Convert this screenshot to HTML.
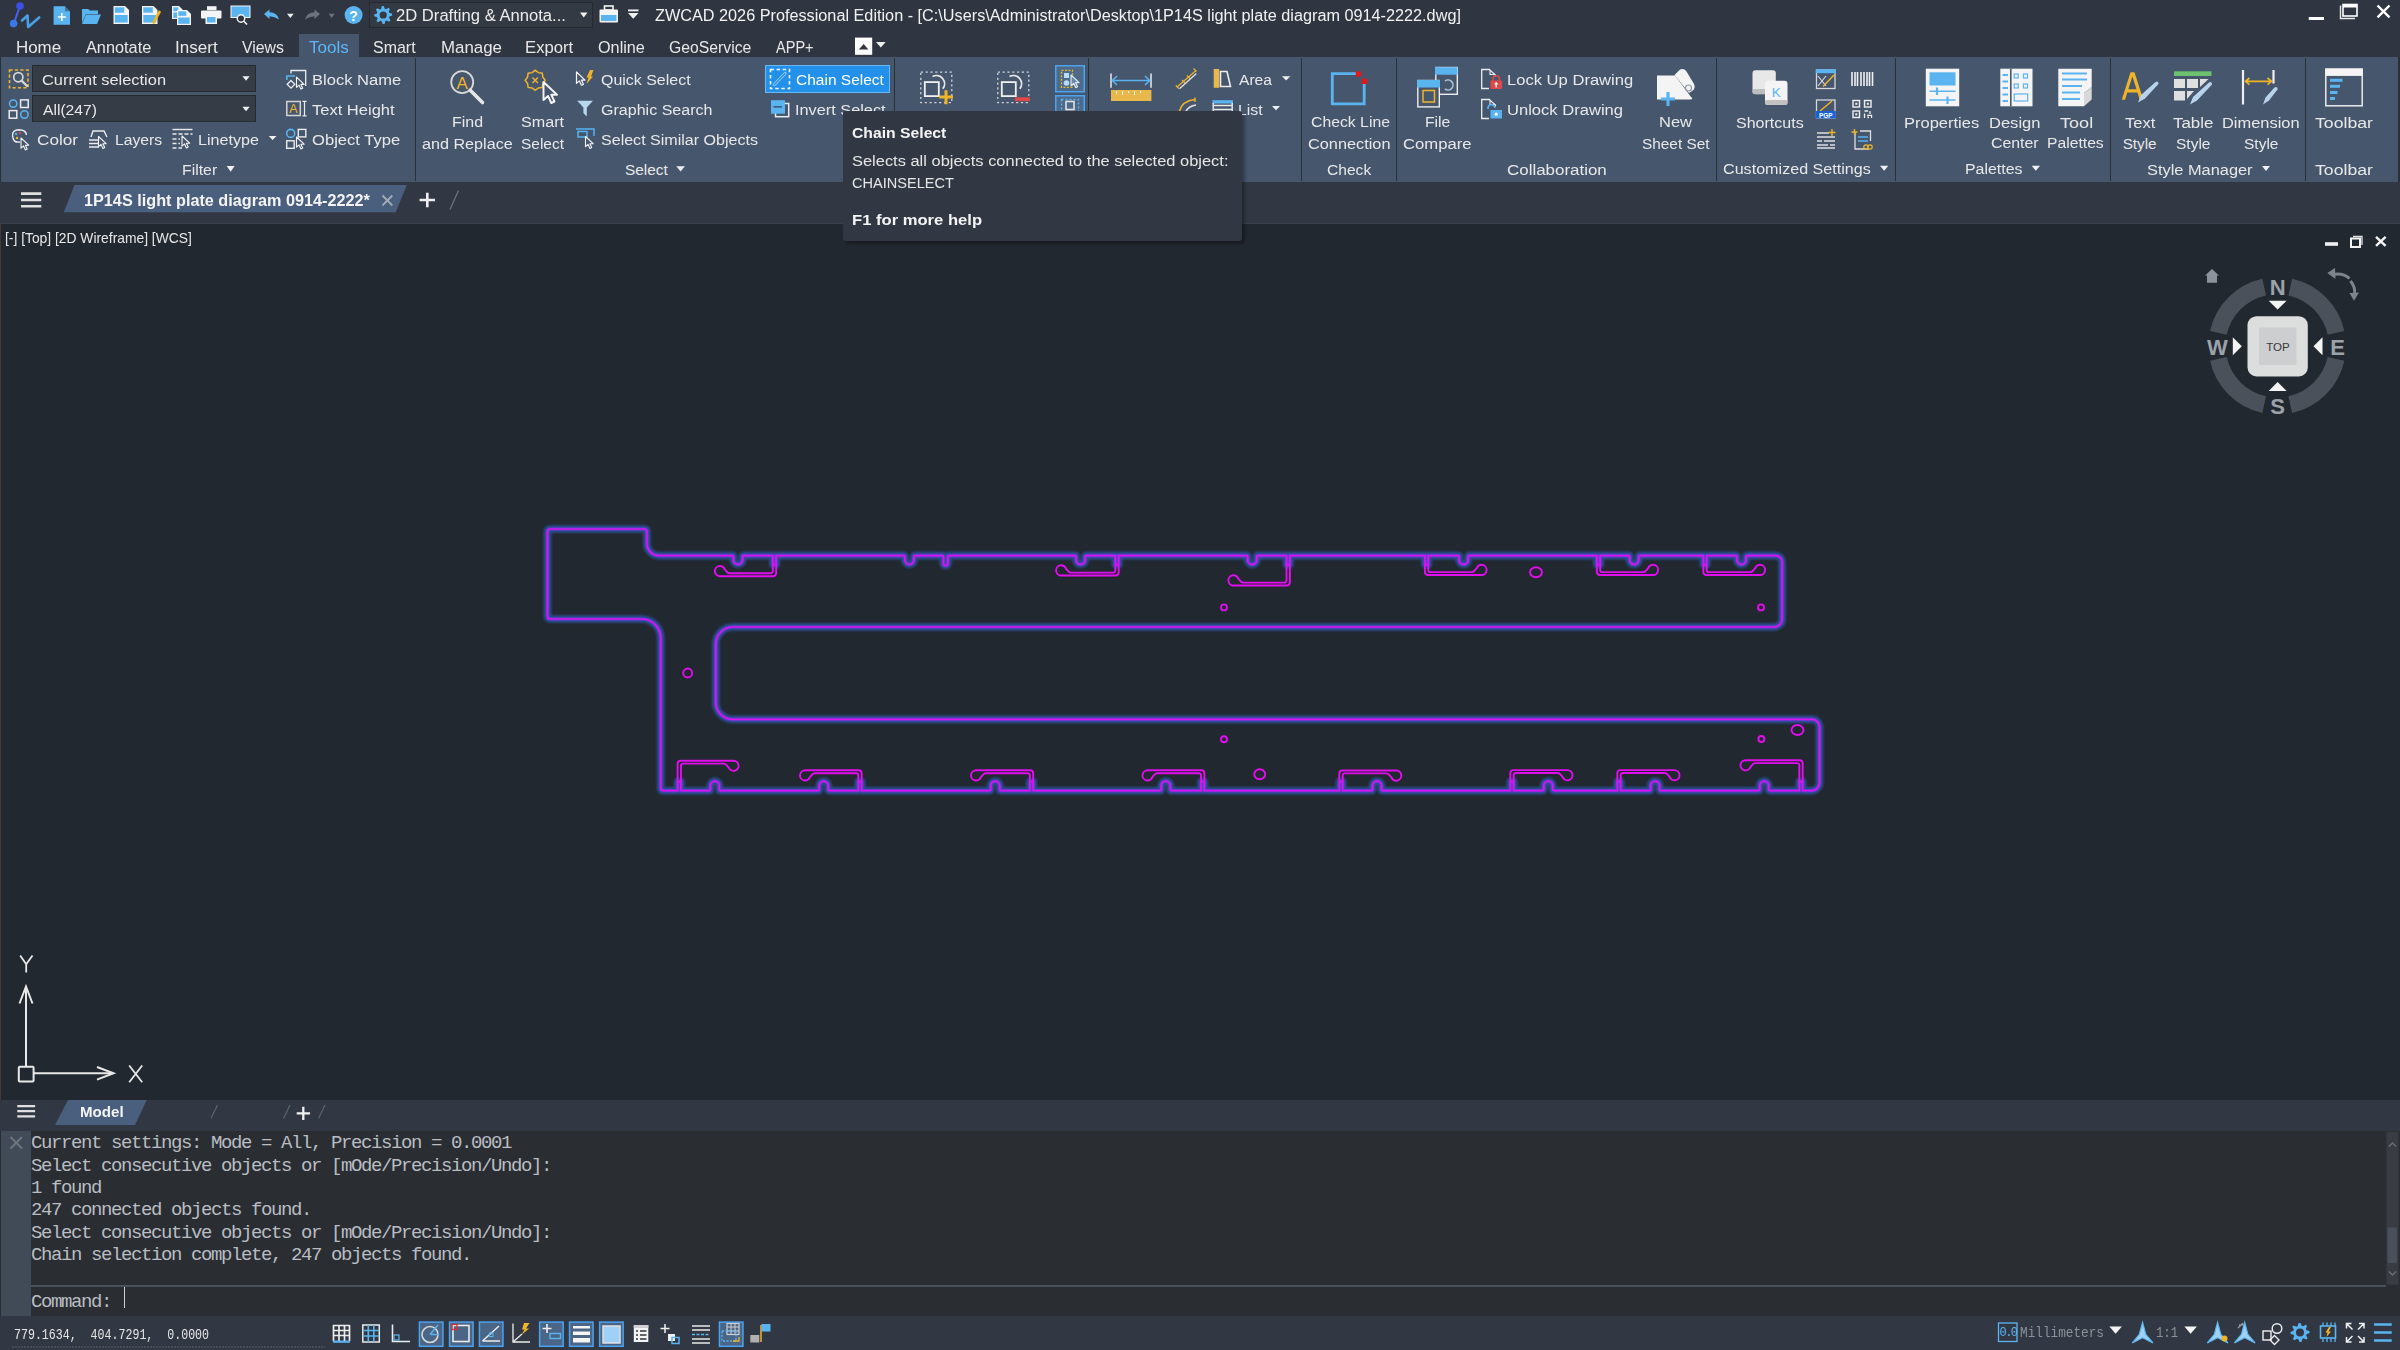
<!DOCTYPE html>
<html><head><meta charset="utf-8"><style>
html,body{margin:0;padding:0;width:2400px;height:1350px;overflow:hidden;background:#21262e;}
body{position:relative;font-family:"Liberation Sans", sans-serif;}
.t{position:absolute;white-space:pre;}
svg{overflow:visible;position:absolute}
</style></head><body>
<div style="position:absolute;left:0px;top:0px;width:2400px;height:57px;background:#303641"></div><div style="position:absolute;left:0px;top:57px;width:2400px;height:125px;background:#2b3038"></div><div style="position:absolute;left:1px;top:57px;width:2397px;height:125px;background:#46566d"></div><div style="position:absolute;left:0px;top:182px;width:2400px;height:42px;background:#323843"></div><div style="position:absolute;left:0px;top:224px;width:2400px;height:876px;background:#22282f"></div><div style="position:absolute;left:0px;top:223px;width:2400px;height:1px;background:#3a4048"></div><div style="position:absolute;left:0px;top:224px;width:1px;height:876px;background:#4a3532"></div><div style="position:absolute;left:0px;top:1100px;width:2400px;height:31px;background:#323843"></div><div style="position:absolute;left:0px;top:1131px;width:2400px;height:185px;background:#2a2d32"></div><div style="position:absolute;left:1px;top:1131px;width:30px;height:185px;background:#414a57"></div><div style="position:absolute;left:0px;top:1316px;width:2400px;height:34px;background:#323843"></div><div style="position:absolute;left:414.5px;top:58px;width:1.4px;height:123px;background:#2b3037"></div><div style="position:absolute;left:893.5px;top:58px;width:1.4px;height:123px;background:#2b3037"></div><div style="position:absolute;left:1087.5px;top:58px;width:1.4px;height:123px;background:#2b3037"></div><div style="position:absolute;left:1301.0px;top:58px;width:1.4px;height:123px;background:#2b3037"></div><div style="position:absolute;left:1396.0px;top:58px;width:1.4px;height:123px;background:#2b3037"></div><div style="position:absolute;left:1716.0px;top:58px;width:1.4px;height:123px;background:#2b3037"></div><div style="position:absolute;left:1894.5px;top:58px;width:1.4px;height:123px;background:#2b3037"></div><div style="position:absolute;left:2110.0px;top:58px;width:1.4px;height:123px;background:#2b3037"></div><div style="position:absolute;left:2304.5px;top:58px;width:1.4px;height:123px;background:#2b3037"></div><div style="position:absolute;left:299px;top:34px;width:60px;height:23px;background:#46566d"></div><div class="t" style="left:16.45px;top:38.80px;font-size:16.06px;line-height:16.06px;color:#e8e8e8;font-weight:normal;font-family:'Liberation Sans';transform:scaleX(1.0542);transform-origin:0 0;">Home</div><div class="t" style="left:86.30px;top:38.80px;font-size:16.06px;line-height:16.06px;color:#e8e8e8;font-weight:normal;font-family:'Liberation Sans';transform:scaleX(1.0154);transform-origin:0 0;">Annotate</div><div class="t" style="left:174.76px;top:38.80px;font-size:16.06px;line-height:16.06px;color:#e8e8e8;font-weight:normal;font-family:'Liberation Sans';transform:scaleX(1.0630);transform-origin:0 0;">Insert</div><div class="t" style="left:242.00px;top:38.80px;font-size:16.06px;line-height:16.06px;color:#e8e8e8;font-weight:normal;font-family:'Liberation Sans';transform:scaleX(0.9864);transform-origin:0 0;">Views</div><div class="t" style="left:308.66px;top:38.80px;font-size:16.06px;line-height:16.06px;color:#5db6f5;font-weight:normal;font-family:'Liberation Sans';transform:scaleX(1.0629);transform-origin:0 0;">Tools</div><div class="t" style="left:373.36px;top:38.80px;font-size:16.06px;line-height:16.06px;color:#e8e8e8;font-weight:normal;font-family:'Liberation Sans';transform:scaleX(0.9946);transform-origin:0 0;">Smart</div><div class="t" style="left:440.65px;top:38.80px;font-size:16.06px;line-height:16.06px;color:#e8e8e8;font-weight:normal;font-family:'Liberation Sans';transform:scaleX(1.0503);transform-origin:0 0;">Manage</div><div class="t" style="left:525.26px;top:38.80px;font-size:16.06px;line-height:16.06px;color:#e8e8e8;font-weight:normal;font-family:'Liberation Sans';transform:scaleX(1.0405);transform-origin:0 0;">Export</div><div class="t" style="left:598.35px;top:38.80px;font-size:16.06px;line-height:16.06px;color:#e8e8e8;font-weight:normal;font-family:'Liberation Sans';transform:scaleX(1.0110);transform-origin:0 0;">Online</div><div class="t" style="left:669.21px;top:38.80px;font-size:16.06px;line-height:16.06px;color:#e8e8e8;font-weight:normal;font-family:'Liberation Sans';transform:scaleX(0.9814);transform-origin:0 0;">GeoService</div><div class="t" style="left:776.40px;top:38.80px;font-size:16.06px;line-height:16.06px;color:#e8e8e8;font-weight:normal;font-family:'Liberation Sans';transform:scaleX(0.9066);transform-origin:0 0;">APP+</div><div class="t" style="left:655.31px;top:7.64px;font-size:15.78px;line-height:15.78px;color:#f2f2f2;font-weight:normal;font-family:'Liberation Sans';transform:scaleX(1.0299);transform-origin:0 0;">ZWCAD 2026 Professional Edition - [C:\Users\Administrator\Desktop\1P14S light plate diagram 0914-2222.dwg]</div><div style="position:absolute;left:369px;top:1.5px;width:224px;height:26.5px;background:#343a43;border:1px solid #262a30;box-sizing:border-box"></div><div class="t" style="left:396.17px;top:7.64px;font-size:15.78px;line-height:15.78px;color:#ececec;font-weight:normal;font-family:'Liberation Sans';transform:scaleX(1.0536);transform-origin:0 0;">2D Drafting &amp; Annota...</div><div style="position:absolute;left:31.5px;top:65px;width:224.5px;height:27px;background:#353c46;border:1px solid #262b32;box-sizing:border-box"></div><div style="position:absolute;left:31.5px;top:95.2px;width:224.5px;height:26.5px;background:#353c46;border:1px solid #262b32;box-sizing:border-box"></div><div class="t" style="left:41.68px;top:71.86px;font-size:15.22px;line-height:15.22px;color:#e8e8e8;font-weight:normal;font-family:'Liberation Sans';transform:scaleX(1.0779);transform-origin:0 0;">Current selection</div><div class="t" style="left:42.50px;top:102.01px;font-size:15.22px;line-height:15.22px;color:#e8e8e8;font-weight:normal;font-family:'Liberation Sans';transform:scaleX(1.0281);transform-origin:0 0;">All(247)</div><div class="t" style="left:36.84px;top:131.61px;font-size:15.22px;line-height:15.22px;color:#e8e8e8;font-weight:normal;font-family:'Liberation Sans';transform:scaleX(1.1265);transform-origin:0 0;">Color</div><div class="t" style="left:114.64px;top:131.61px;font-size:15.22px;line-height:15.22px;color:#e8e8e8;font-weight:normal;font-family:'Liberation Sans';transform:scaleX(1.0337);transform-origin:0 0;">Layers</div><div class="t" style="left:198.41px;top:131.61px;font-size:15.22px;line-height:15.22px;color:#e8e8e8;font-weight:normal;font-family:'Liberation Sans';transform:scaleX(1.0576);transform-origin:0 0;">Linetype</div><div class="t" style="left:312.48px;top:72.11px;font-size:15.22px;line-height:15.22px;color:#e8e8e8;font-weight:normal;font-family:'Liberation Sans';transform:scaleX(1.0860);transform-origin:0 0;">Block Name</div><div class="t" style="left:312.37px;top:102.01px;font-size:15.22px;line-height:15.22px;color:#e8e8e8;font-weight:normal;font-family:'Liberation Sans';transform:scaleX(1.0846);transform-origin:0 0;">Text Height</div><div class="t" style="left:312.04px;top:132.31px;font-size:15.22px;line-height:15.22px;color:#e8e8e8;font-weight:normal;font-family:'Liberation Sans';transform:scaleX(1.0903);transform-origin:0 0;">Object Type</div><div class="t" style="left:182.13px;top:161.90px;font-size:15.36px;line-height:15.36px;color:#e8e8e8;font-weight:normal;font-family:'Liberation Sans';transform:scaleX(1.0302);transform-origin:0 0;">Filter</div><div class="t" style="left:452.12px;top:114.41px;font-size:15.22px;line-height:15.22px;color:#e8e8e8;font-weight:normal;font-family:'Liberation Sans';transform:scaleX(1.0493);transform-origin:0 0;">Find</div><div class="t" style="left:422.45px;top:135.71px;font-size:15.22px;line-height:15.22px;color:#e8e8e8;font-weight:normal;font-family:'Liberation Sans';transform:scaleX(1.0614);transform-origin:0 0;">and Replace</div><div class="t" style="left:520.95px;top:114.41px;font-size:15.22px;line-height:15.22px;color:#e8e8e8;font-weight:normal;font-family:'Liberation Sans';transform:scaleX(1.0618);transform-origin:0 0;">Smart</div><div class="t" style="left:520.98px;top:135.71px;font-size:15.22px;line-height:15.22px;color:#e8e8e8;font-weight:normal;font-family:'Liberation Sans';transform:scaleX(1.0159);transform-origin:0 0;">Select</div><div class="t" style="left:600.66px;top:71.96px;font-size:15.22px;line-height:15.22px;color:#e8e8e8;font-weight:normal;font-family:'Liberation Sans';transform:scaleX(1.0486);transform-origin:0 0;">Quick Select</div><div class="t" style="left:600.50px;top:101.81px;font-size:15.22px;line-height:15.22px;color:#e8e8e8;font-weight:normal;font-family:'Liberation Sans';transform:scaleX(1.0542);transform-origin:0 0;">Graphic Search</div><div class="t" style="left:600.66px;top:132.11px;font-size:15.22px;line-height:15.22px;color:#e8e8e8;font-weight:normal;font-family:'Liberation Sans';transform:scaleX(1.0546);transform-origin:0 0;">Select Similar Objects</div><div class="t" style="left:625.09px;top:162.20px;font-size:15.36px;line-height:15.36px;color:#e8e8e8;font-weight:normal;font-family:'Liberation Sans';">Select</div><div style="position:absolute;left:765px;top:65px;width:125px;height:27.5px;background:#2391ea;border:1px solid #6cb8f5;box-sizing:border-box"></div><div class="t" style="left:796.02px;top:71.91px;font-size:15.22px;line-height:15.22px;color:#ffffff;font-weight:normal;font-family:'Liberation Sans';transform:scaleX(1.0188);transform-origin:0 0;">Chain Select</div><div class="t" style="left:795.33px;top:101.91px;font-size:15.22px;line-height:15.22px;color:#e8e8e8;font-weight:normal;font-family:'Liberation Sans';transform:scaleX(1.0711);transform-origin:0 0;">Invert Select</div><div class="t" style="left:1239.00px;top:72.11px;font-size:15.22px;line-height:15.22px;color:#e8e8e8;font-weight:normal;font-family:'Liberation Sans';transform:scaleX(1.0244);transform-origin:0 0;">Area</div><div class="t" style="left:1238.13px;top:101.51px;font-size:15.22px;line-height:15.22px;color:#e8e8e8;font-weight:normal;font-family:'Liberation Sans';transform:scaleX(1.0398);transform-origin:0 0;">List</div><div class="t" style="left:1310.71px;top:114.41px;font-size:15.22px;line-height:15.22px;color:#e8e8e8;font-weight:normal;font-family:'Liberation Sans';transform:scaleX(1.0367);transform-origin:0 0;">Check Line</div><div class="t" style="left:1308.38px;top:135.61px;font-size:15.22px;line-height:15.22px;color:#e8e8e8;font-weight:normal;font-family:'Liberation Sans';transform:scaleX(1.0716);transform-origin:0 0;">Connection</div><div class="t" style="left:1327.22px;top:161.60px;font-size:15.36px;line-height:15.36px;color:#e8e8e8;font-weight:normal;font-family:'Liberation Sans';transform:scaleX(1.0156);transform-origin:0 0;">Check</div><div class="t" style="left:1425.44px;top:114.41px;font-size:15.22px;line-height:15.22px;color:#e8e8e8;font-weight:normal;font-family:'Liberation Sans';transform:scaleX(1.0324);transform-origin:0 0;">File</div><div class="t" style="left:1403.37px;top:135.61px;font-size:15.22px;line-height:15.22px;color:#e8e8e8;font-weight:normal;font-family:'Liberation Sans';transform:scaleX(1.0946);transform-origin:0 0;">Compare</div><div class="t" style="left:1506.67px;top:72.11px;font-size:15.22px;line-height:15.22px;color:#e8e8e8;font-weight:normal;font-family:'Liberation Sans';transform:scaleX(1.0892);transform-origin:0 0;">Lock Up Drawing</div><div class="t" style="left:1506.84px;top:101.91px;font-size:15.22px;line-height:15.22px;color:#e8e8e8;font-weight:normal;font-family:'Liberation Sans';transform:scaleX(1.0890);transform-origin:0 0;">Unlock Drawing</div><div class="t" style="left:1507.15px;top:161.70px;font-size:15.36px;line-height:15.36px;color:#e8e8e8;font-weight:normal;font-family:'Liberation Sans';transform:scaleX(1.1024);transform-origin:0 0;">Collaboration</div><div class="t" style="left:1659.28px;top:114.41px;font-size:15.22px;line-height:15.22px;color:#e8e8e8;font-weight:normal;font-family:'Liberation Sans';transform:scaleX(1.0833);transform-origin:0 0;">New</div><div class="t" style="left:1642.38px;top:135.71px;font-size:15.22px;line-height:15.22px;color:#e8e8e8;font-weight:normal;font-family:'Liberation Sans';transform:scaleX(1.0108);transform-origin:0 0;">Sheet Set</div><div class="t" style="left:1736.06px;top:114.61px;font-size:15.22px;line-height:15.22px;color:#e8e8e8;font-weight:normal;font-family:'Liberation Sans';transform:scaleX(1.0531);transform-origin:0 0;">Shortcuts</div><div class="t" style="left:1723.39px;top:161.20px;font-size:15.36px;line-height:15.36px;color:#e8e8e8;font-weight:normal;font-family:'Liberation Sans';transform:scaleX(1.0497);transform-origin:0 0;">Customized Settings</div><div class="t" style="left:1904.48px;top:114.61px;font-size:15.22px;line-height:15.22px;color:#e8e8e8;font-weight:normal;font-family:'Liberation Sans';transform:scaleX(1.0841);transform-origin:0 0;">Properties</div><div class="t" style="left:1989.48px;top:114.61px;font-size:15.22px;line-height:15.22px;color:#e8e8e8;font-weight:normal;font-family:'Liberation Sans';transform:scaleX(1.0857);transform-origin:0 0;">Design</div><div class="t" style="left:1990.91px;top:135.41px;font-size:15.22px;line-height:15.22px;color:#e8e8e8;font-weight:normal;font-family:'Liberation Sans';transform:scaleX(1.0417);transform-origin:0 0;">Center</div><div class="t" style="left:2059.64px;top:114.61px;font-size:15.22px;line-height:15.22px;color:#e8e8e8;font-weight:normal;font-family:'Liberation Sans';transform:scaleX(1.1883);transform-origin:0 0;">Tool</div><div class="t" style="left:2047.04px;top:135.41px;font-size:15.22px;line-height:15.22px;color:#e8e8e8;font-weight:normal;font-family:'Liberation Sans';transform:scaleX(1.0313);transform-origin:0 0;">Palettes</div><div class="t" style="left:1965.43px;top:161.20px;font-size:15.36px;line-height:15.36px;color:#e8e8e8;font-weight:normal;font-family:'Liberation Sans';transform:scaleX(1.0368);transform-origin:0 0;">Palettes</div><div class="t" style="left:2124.97px;top:114.81px;font-size:15.22px;line-height:15.22px;color:#e8e8e8;font-weight:normal;font-family:'Liberation Sans';transform:scaleX(1.0851);transform-origin:0 0;">Text</div><div class="t" style="left:2122.69px;top:136.11px;font-size:15.22px;line-height:15.22px;color:#e8e8e8;font-weight:normal;font-family:'Liberation Sans';">Style</div><div class="t" style="left:2172.96px;top:114.81px;font-size:15.22px;line-height:15.22px;color:#e8e8e8;font-weight:normal;font-family:'Liberation Sans';transform:scaleX(1.1086);transform-origin:0 0;">Table</div><div class="t" style="left:2176.08px;top:136.11px;font-size:15.22px;line-height:15.22px;color:#e8e8e8;font-weight:normal;font-family:'Liberation Sans';transform:scaleX(1.0188);transform-origin:0 0;">Style</div><div class="t" style="left:2221.99px;top:114.81px;font-size:15.22px;line-height:15.22px;color:#e8e8e8;font-weight:normal;font-family:'Liberation Sans';transform:scaleX(1.0795);transform-origin:0 0;">Dimension</div><div class="t" style="left:2244.08px;top:136.11px;font-size:15.22px;line-height:15.22px;color:#e8e8e8;font-weight:normal;font-family:'Liberation Sans';transform:scaleX(1.0188);transform-origin:0 0;">Style</div><div class="t" style="left:2147.35px;top:162.00px;font-size:15.36px;line-height:15.36px;color:#e8e8e8;font-weight:normal;font-family:'Liberation Sans';transform:scaleX(1.0657);transform-origin:0 0;">Style Manager</div><div class="t" style="left:2314.95px;top:114.81px;font-size:15.22px;line-height:15.22px;color:#e8e8e8;font-weight:normal;font-family:'Liberation Sans';transform:scaleX(1.1613);transform-origin:0 0;">Toolbar</div><div class="t" style="left:2314.95px;top:162.00px;font-size:15.36px;line-height:15.36px;color:#e8e8e8;font-weight:normal;font-family:'Liberation Sans';transform:scaleX(1.1507);transform-origin:0 0;">Toolbar</div><svg style="left:0;top:0" width="2400" height="1350" viewBox="0 0 2400 1350"><polygon points="74.5,185 406.8,185 395.7,212.2 63.8,212.2" fill="#4a5f7d"/><polygon points="68,1100 146.7,1100 135,1125 55.1,1125" fill="#4a5f7d"/></svg><div class="t" style="left:83.83px;top:192.40px;font-size:16.06px;line-height:16.06px;color:#f4f4f4;font-weight:bold;font-family:'Liberation Sans';transform:scaleX(1.0112);transform-origin:0 0;">1P14S light plate diagram 0914-2222*</div><div class="t" style="left:5.03px;top:230.85px;font-size:14.94px;line-height:14.94px;color:#e8e8e8;font-weight:normal;font-family:'Liberation Sans';transform:scaleX(0.9263);transform-origin:0 0;">[-] [Top] [2D Wireframe] [WCS]</div><div class="t" style="left:79.99px;top:1105.15px;font-size:14.94px;line-height:14.94px;color:#f4f4f4;font-weight:bold;font-family:'Liberation Sans';transform:scaleX(1.0131);transform-origin:0 0;">Model</div><div class="t" style="left:31px;top:1134.04px;font-family:'Liberation Mono';font-size:19px;line-height:19px;letter-spacing:-1.4px;color:#b9bdc3">Current settings: Mode = All, Precision = 0.0001</div><div class="t" style="left:31px;top:1156.50px;font-family:'Liberation Mono';font-size:19px;line-height:19px;letter-spacing:-1.4px;color:#b9bdc3">Select consecutive objects or [mOde/Precision/Undo]:</div><div class="t" style="left:31px;top:1178.96px;font-family:'Liberation Mono';font-size:19px;line-height:19px;letter-spacing:-1.4px;color:#b9bdc3">1 found</div><div class="t" style="left:31px;top:1201.42px;font-family:'Liberation Mono';font-size:19px;line-height:19px;letter-spacing:-1.4px;color:#b9bdc3">247 connected objects found.</div><div class="t" style="left:31px;top:1223.88px;font-family:'Liberation Mono';font-size:19px;line-height:19px;letter-spacing:-1.4px;color:#b9bdc3">Select consecutive objects or [mOde/Precision/Undo]:</div><div class="t" style="left:31px;top:1246.34px;font-family:'Liberation Mono';font-size:19px;line-height:19px;letter-spacing:-1.4px;color:#b9bdc3">Chain selection complete, 247 objects found.</div><div class="t" style="left:31px;top:1292.74px;font-family:'Liberation Mono';font-size:19px;line-height:19px;letter-spacing:-1.4px;color:#b9bdc3">Command: </div><div style="position:absolute;left:124px;top:1286px;width:1.1px;height:22px;background:#d0d0d0"></div><div style="position:absolute;left:31px;top:1285px;width:2355px;height:1.5px;background:#4a535c"></div><div class="t" style="left:13.89px;top:1328.42px;font-size:14.85px;line-height:14.85px;color:#e6e6e6;font-weight:normal;font-family:'Liberation Mono';transform:scaleX(0.7820);transform-origin:0 0;">779.1634,  404.7291,  0.0000</div><div class="t" style="left:2020.04px;top:1326.39px;font-size:15.15px;line-height:15.15px;color:#8d9298;font-weight:normal;font-family:'Liberation Mono';transform:scaleX(0.8397);transform-origin:0 0;">Millimeters</div><div class="t" style="left:2156.44px;top:1326.39px;font-size:15.15px;line-height:15.15px;color:#8d9298;font-weight:normal;font-family:'Liberation Mono';transform:scaleX(0.8083);transform-origin:0 0;">1:1</div><svg style="left:0;top:0" width="2400" height="1350" viewBox="0 0 2400 1350"><line x1="20" y1="6.2" x2="13.75" y2="23.4" stroke="#4a62e8" stroke-width="2"/><circle cx="20" cy="6" r="3.8" fill="#3c4fe6"/><circle cx="13.6" cy="23.6" r="3.8" fill="#3a78e8"/><path d="M22 20.5 L27.5 15.5 L28.2 27 L39.2 17.5" fill="none" stroke="#4aa0e6" stroke-width="2.6" stroke-linejoin="round" stroke-linecap="round"/><path d="M53.6 6.2 H65 L70 11.2 V24.8 H53.6 Z" fill="#5ab4f0"/><path d="M65 6.2 V11.2 H70" fill="#2f343d" opacity="0.5"/><path d="M61.8 13 V21 M57.8 17 H65.8" stroke="#fff" stroke-width="1.6"/><path d="M82 9 H88 L90 10.5 H98 V14 H86 L82 23 Z" fill="#5ab4f0"/><path d="M86 14.5 H101 L97 24 H82 Z" fill="#5ab4f0"/><path d="M113.5 6 H125.0 L129.0 10 V24 H113.5 Z" fill="#f4f4f4"/><rect x="114.8" y="7.3" width="9.5" height="5.3999999999999995" fill="#5ab4f0"/><rect x="114.8" y="15.0" width="12.9" height="7.56" fill="#5ab4f0"/><path d="M142 6 H153.5 L157.5 10 V24 H142 Z" fill="#f4f4f4"/><rect x="143.3" y="7.3" width="9.5" height="5.3999999999999995" fill="#5ab4f0"/><rect x="143.3" y="15.0" width="12.9" height="7.56" fill="#5ab4f0"/><path d="M160 11 L153 23.5" stroke="#f0b429" stroke-width="2.6"/><path d="M172 6 H179 L183 10 V19 H172 Z" fill="#f4f4f4"/><rect x="173.3" y="7.3" width="5" height="3.9" fill="#5ab4f0"/><rect x="173.3" y="12.5" width="8.4" height="5.46" fill="#5ab4f0"/><path d="M177 10 H187 L191 14 V25 H177 Z" fill="#f4f4f4"/><rect x="178.3" y="11.3" width="8" height="4.5" fill="#5ab4f0"/><rect x="178.3" y="17.5" width="11.4" height="6.3" fill="#5ab4f0"/><rect x="207" y="6.2" width="9.5" height="4" fill="#f4f4f4"/><rect x="201" y="10.5" width="20.5" height="8" rx="1" fill="#f4f4f4"/><rect x="205.5" y="15.5" width="11.5" height="8.5" fill="#f4f4f4"/><rect x="207" y="17" width="8.5" height="5.5" fill="#5ab4f0"/><rect x="231" y="6" width="19" height="11.5" fill="#5ab4f0"/><rect x="231" y="6" width="19" height="11.5" fill="none" stroke="#f4f4f4" stroke-width="1"/><circle cx="241" cy="18.5" r="3.7" fill="#30353e" stroke="#f4f4f4" stroke-width="1.4"/><path d="M243.6 21 L247 24.5" stroke="#f4f4f4" stroke-width="1.6"/><path d="M264 14 L269.5 9.5 V12.3 Q277.5 12.5 279 19.5 Q275 16.5 269.5 16.3 V19 Z" fill="#5ab4f0"/><polygon points="287,13.8 293.7,13.8 290.35,17.9" fill="#f0f0f0"/><path d="M320 14 L314.5 9.5 V12.3 Q306.5 12.5 305 19.5 Q309 16.5 314.5 16.3 V19 Z" fill="#6c737c"/><polygon points="328.7,13.8 334.7,13.8 331.7,17.9" fill="#6c737c"/><circle cx="353.6" cy="15" r="9" fill="#5ab4f0"/><text x="353.6" y="20.5" font-family="Liberation Sans" font-weight="bold" font-size="14" fill="#fff" text-anchor="middle">?</text><polygon points="392.10,13.68 392.19,15.44 389.49,16.57 389.06,17.77 390.43,20.36 389.24,21.67 386.53,20.56 385.38,21.10 384.52,23.90 382.76,23.99 381.63,21.29 380.43,20.86 377.84,22.23 376.53,21.04 377.64,18.33 377.10,17.18 374.30,16.32 374.21,14.56 376.91,13.43 377.34,12.23 375.97,9.64 377.16,8.33 379.87,9.44 381.02,8.90 381.88,6.10 383.64,6.01 384.77,8.71 385.97,9.14 388.56,7.77 389.87,8.96 388.76,11.67 389.30,12.82" fill="#5ab4f0"/><circle cx="383.2" cy="15" r="3.6" fill="#343a43"/><polygon points="580,12.5 587.5,12.5 583.75,17.5" fill="#f0f0f0"/><rect x="604.5" y="6" width="8.5" height="4" fill="none" stroke="#f4f4f4" stroke-width="1.6"/><rect x="599.5" y="9.5" width="18.5" height="13" rx="1" fill="#f4f4f4"/><rect x="601" y="15" width="15.5" height="6" fill="#5ab4f0"/><rect x="628" y="9.5" width="10.5" height="1.8" fill="#f4f4f4"/><polygon points="628,13 638.5,13 633.25,18.75" fill="#f0f0f0"/><rect x="2308.75" y="17" width="15.25" height="3" fill="#fff"/><path d="M2340.5 5.5 V18.5 H2355" fill="none" stroke="#e8e8e8" stroke-width="1.4"/><rect x="2343" y="4.5" width="14" height="11.5" fill="none" stroke="#fff" stroke-width="1.6"/><rect x="2343" y="4.5" width="14" height="3" fill="#fff"/><path d="M2377.5 5.5 L2389.5 17.3 M2389.5 5.5 L2377.5 17.3" stroke="#fff" stroke-width="2.4"/><rect x="855" y="37.6" width="17.2" height="17.2" fill="#fff"/><polygon points="858.8,49.5 868.4,49.5 863.6,44" fill="#30353e"/><polygon points="876,42 885.6,42 880.8,47.5" fill="#f0f0f0"/><rect x="9.5" y="70" width="18.5" height="17.8" fill="none" stroke="#f0b429" stroke-width="1.6" stroke-dasharray="3.2 2.2"/><circle cx="18.3" cy="77.2" r="4.6" fill="none" stroke="#d6d6d6" stroke-width="1.7"/><path d="M21.6 80.6 L27 86" stroke="#d6d6d6" stroke-width="2.3" stroke-linecap="round"/><circle cx="13.2" cy="103.6" r="3.7" fill="none" stroke="#5ab4f0" stroke-width="1.5"/><rect x="20.6" y="99.9" width="7.6" height="7.6" fill="none" stroke="#ececec" stroke-width="1.5"/><rect x="9.2" y="110.6" width="7.6" height="7.6" fill="none" stroke="#ececec" stroke-width="1.5"/><circle cx="24.4" cy="114.5" r="3.7" fill="none" stroke="#5ab4f0" stroke-width="1.5"/><polygon points="242.4,76.3 249.7,76.3 246.05,80.8" fill="#f0f0f0"/><polygon points="242.4,106.7 249.7,106.7 246.05,111.2" fill="#f0f0f0"/><path d="M13 138 Q11 130 19 129.8 Q26 130 26.5 135" fill="none" stroke="#ececec" stroke-width="1.4"/><path d="M13 138 Q14 143 20 142" fill="none" stroke="#ececec" stroke-width="1.4"/><circle cx="16" cy="134" r="1.2" fill="#5ab4f0"/><circle cx="20" cy="133" r="1.2" fill="#e04848"/><circle cx="17" cy="138" r="1.2" fill="#f0b429"/><polygon points="21.00,138.00 21.00,148.20 23.55,145.91 25.42,149.90 27.20,149.05 25.42,145.22 28.65,145.22" fill="#46566d" stroke="#f4f4f4" stroke-width="1.10" stroke-linejoin="round"/><path d="M91 137 L93 131 H104 L107 137" fill="none" stroke="#ececec" stroke-width="1.4"/><path d="M89 140 H99 M89 143.5 H98 M89 147 H99" stroke="#ececec" stroke-width="1.5"/><polygon points="98.50,136.50 98.50,146.70 101.05,144.41 102.92,148.40 104.70,147.55 102.92,143.72 106.15,143.72" fill="#46566d" stroke="#f4f4f4" stroke-width="1.10" stroke-linejoin="round"/><path d="M172.5 129.5 H192.5" stroke="#ececec" stroke-width="1.4"/><path d="M172.5 134 H192.5 M172.5 139 H180 M172.5 143.5 H180 M172.5 148 H182" stroke="#ececec" stroke-width="1.4" stroke-dasharray="4 2"/><polygon points="182.00,136.00 182.00,146.20 184.55,143.91 186.42,147.90 188.21,147.05 186.42,143.22 189.65,143.22" fill="#46566d" stroke="#f4f4f4" stroke-width="1.10" stroke-linejoin="round"/><polygon points="268.7,136 276.5,136 272.6,139.9" fill="#f0f0f0"/><path d="M291 73.5 V70.5 H305.7 V86" fill="none" stroke="#ececec" stroke-width="1.3"/><path d="M286.8 80 V76 H295" fill="none" stroke="#5ab4f0" stroke-width="1.5"/><polygon points="291,80.5 294.8,84.3 291,88.1 287.2,84.3" fill="none" stroke="#ececec" stroke-width="1.3"/><polygon points="296.50,77.20 296.50,87.40 299.05,85.11 300.92,89.10 302.70,88.25 300.92,84.42 304.15,84.42" fill="#46566d" stroke="#f4f4f4" stroke-width="1.10" stroke-linejoin="round"/><rect x="286.8" y="101.5" width="13.5" height="14" fill="none" stroke="#d4d4d4" stroke-width="1.5"/><text x="293.5" y="113.3" font-family="Liberation Sans" font-size="12.5" fill="#f0b429" text-anchor="middle">A</text><path d="M304.5 101 V116 M302.5 101.3 H306.5 M302.5 115.8 H306.5" stroke="#ececec" stroke-width="1.2"/><circle cx="290.7" cy="133.4" r="4" fill="none" stroke="#5ab4f0" stroke-width="1.6"/><rect x="298.3" y="129.4" width="7.5" height="7.5" fill="none" stroke="#ececec" stroke-width="1.4"/><rect x="286.7" y="140.8" width="7.5" height="7.5" fill="none" stroke="#ececec" stroke-width="1.4"/><polygon points="296.50,137.00 296.50,147.20 299.05,144.91 300.92,148.90 302.70,148.05 300.92,144.22 304.15,144.22" fill="#46566d" stroke="#f4f4f4" stroke-width="1.10" stroke-linejoin="round"/><polygon points="226.7,166 234.6,166 230.64999999999998,171.75" fill="#f0f0f0"/><circle cx="462.2" cy="82.1" r="11" fill="none" stroke="#d8d8d8" stroke-width="1.8"/><path d="M470.2 90.2 L482.5 102.5" stroke="#e6e6e6" stroke-width="3.6" stroke-linecap="round"/><text x="462.2" y="88.6" font-family="Liberation Sans" font-size="17" fill="#f0b429" text-anchor="middle">A</text><polygon points="545.20,80.30 542.87,83.48 542.27,87.37 538.38,87.97 535.20,90.30 532.02,87.97 528.13,87.37 527.53,83.48 525.20,80.30 527.53,77.12 528.13,73.23 532.02,72.63 535.20,70.30 538.38,72.63 542.27,73.23 542.87,77.12" fill="none" stroke="#f0b429" stroke-width="1.5"/><path d="M532.5 77.6 L537.9 83 M537.9 77.6 L532.5 83" stroke="#f0b429" stroke-width="1.4"/><polygon points="543.50,82.00 543.50,100.00 548.00,95.95 551.30,103.00 554.45,101.50 551.30,94.75 557.00,94.75" fill="#46566d" stroke="#f4f4f4" stroke-width="1.95" stroke-linejoin="round"/><polygon points="576.50,72.00 576.50,83.40 579.35,80.84 581.44,85.30 583.43,84.35 581.44,80.08 585.05,80.08" fill="#46566d" stroke="#f4f4f4" stroke-width="1.23" stroke-linejoin="round"/><polygon points="590,70 593.5,70 591,76.5 593,76.5 586.5,84 588.5,77.5 586.5,77.5" fill="#f0b429"/><polygon points="577.2,100.7 593,100.7 586.8,107.5 586.8,116.5 583.4,113 583.4,107.5" fill="#b8d8f0"/><path d="M578 131.5 V137 H587 V131.5 Z" fill="none" stroke="#5ab4f0" stroke-width="1.5"/><path d="M576 129 H594 V136" fill="none" stroke="#5ab4f0" stroke-width="1.5"/><polygon points="585.50,136.50 585.50,146.70 588.05,144.41 589.92,148.40 591.71,147.55 589.92,143.72 593.15,143.72" fill="#46566d" stroke="#f4f4f4" stroke-width="1.10" stroke-linejoin="round"/><polygon points="676.3,166.2 684.9,166.2 680.5999999999999,171.6" fill="#f0f0f0"/><rect x="770.5" y="69.5" width="19" height="19" fill="none" stroke="#f0f6ff" stroke-width="1.6" stroke-dasharray="3.5 2.6"/><path d="M774.5 84.5 L785 73.5" stroke="#9fd0f6" stroke-width="3.2" stroke-linecap="round" opacity="0.9"/><path d="M774.5 84.5 L785 73.5" stroke="#2391ea" stroke-width="1.2" stroke-linecap="round"/><rect x="775.5" y="103.5" width="13.2" height="13.2" fill="none" stroke="#ececec" stroke-width="1.5"/><rect x="771" y="100.2" width="14" height="13.5" fill="#5ab4f0"/><rect x="773.5" y="106" width="8.5" height="1.6" fill="#3e5a78"/><rect x="920.8" y="72.1" width="31" height="30.5" fill="none" stroke="#cfd3d8" stroke-width="1.3" stroke-dasharray="2.2 2.6"/><rect x="924.8" y="82.1" width="14" height="14" fill="none" stroke="#f0f0f0" stroke-width="1.8"/><path d="M932.5 76.5 A8.2 8.2 0 0 1 942.8 88.8" fill="none" stroke="#e8e8e8" stroke-width="1.8"/><path d="M946 90.3 V104.3 M939.2 97.1 H953" stroke="#f0b429" stroke-width="3"/><rect x="997.8" y="72.1" width="31" height="30.5" fill="none" stroke="#cfd3d8" stroke-width="1.3" stroke-dasharray="2.2 2.6"/><rect x="1001.8" y="82.1" width="14" height="14" fill="none" stroke="#f0f0f0" stroke-width="1.8"/><path d="M1009.5 76.5 A8.2 8.2 0 0 1 1019.8 88.8" fill="none" stroke="#e8e8e8" stroke-width="1.8"/><rect x="1015" y="97.3" width="15" height="3.8" fill="#e04848"/><rect x="1055.75" y="65.75" width="28.5" height="26" fill="#4d6a8a" stroke="#4aa3f0" stroke-width="1.5"/><rect x="1061.5" y="70.3" width="11" height="17" fill="none" stroke="#f0b429" stroke-width="1.3" stroke-dasharray="2 1.5"/><rect x="1064" y="73" width="5" height="5" fill="#b8dcf8"/><circle cx="1066.5" cy="83" r="2.8" fill="#b8dcf8"/><polygon points="1071.00,75.00 1071.00,85.80 1073.70,83.37 1075.68,87.60 1077.57,86.70 1075.68,82.65 1079.10,82.65" fill="#6a8aaa" stroke="#e0e8f0" stroke-width="1.17" stroke-linejoin="round"/><rect x="1055.75" y="95.75" width="28.5" height="20" fill="#4d6a8a" stroke="#4aa3f0" stroke-width="1.5"/><rect x="1061.5" y="99.5" width="17" height="14" fill="none" stroke="#5ab4f0" stroke-width="1.3" stroke-dasharray="2 2"/><rect x="1066" y="101.5" width="8" height="8" fill="none" stroke="#e0e0e0" stroke-width="1.6"/><path d="M1111 73.6 V87.8 M1151 73.6 V87.8" stroke="#ececec" stroke-width="1.5"/><path d="M1112 80.5 H1150 M1117 76 L1112.3 80.5 L1117 85 M1145 76 L1149.7 80.5 L1145 85" fill="none" stroke="#5ab4f0" stroke-width="1.5"/><rect x="1111" y="90" width="40.4" height="11" fill="#e8b84a"/><path d="M1116.5 91 V94 M1122.5 91 V95 M1128.5 91 V93 M1134.5 91 V95 M1140.5 91 V93" stroke="#f4f4f4" stroke-width="1"/><path d="M1177 87 L1196 70.5" stroke="#f0b429" stroke-width="1.2"/><path d="M1179.5 88.8 L1196.3 73.5" stroke="#e0e0e0" stroke-width="1.4"/><path d="M1175.8 85.5 L1178.8 88.5 M1193.5 68.5 L1196.5 71.5 M1182 80 L1185 83 M1187 75.5 L1190 78.5" stroke="#f0b429" stroke-width="1.1"/><path d="M1179.5 111 Q1182 101 1195 99.5" fill="none" stroke="#f0b429" stroke-width="1.6"/><path d="M1186 111 Q1189 106 1196 105" fill="none" stroke="#e0e0e0" stroke-width="1.6"/><path d="M1195 97.5 V102" stroke="#f0b429" stroke-width="1.4"/><rect x="1213.7" y="69" width="5.5" height="18.8" fill="#e8b84a"/><path d="M1220.5 71.5 H1227 L1230.5 86.5 H1220.5 Z" fill="none" stroke="#ececec" stroke-width="1.6"/><polygon points="1282,76.3 1290.3,76.3 1286.15,80.5" fill="#f0f0f0"/><polygon points="1272,106 1280,106 1276.0,110.2" fill="#f0f0f0"/><rect x="1212.4" y="100.2" width="20.6" height="3.3" fill="#5ab4f0"/><path d="M1213.2 103 V111 M1232.2 103 V111 M1214 105.5 H1231.5 M1214 109.5 H1231.5" stroke="#ececec" stroke-width="1.4"/><path d="M1357 73.7 H1332.3 V103.8 H1364.2 V81.5" fill="none" stroke="#5ab4f0" stroke-width="2.8"/><rect x="1355.8" y="71.3" width="5.4" height="5.4" fill="#e01818"/><rect x="1361.8" y="78.6" width="5.4" height="5.4" fill="#e01818"/><rect x="1435.8" y="67.5" width="21.5" height="26.8" fill="none" stroke="#ececec" stroke-width="1.4"/><rect x="1435" y="67.2" width="22.5" height="7.5" fill="#5ab4f0"/><path d="M1445 81 A5 5 0 1 1 1445 89" fill="none" stroke="#a9c4dc" stroke-width="1.6"/><rect x="1417.8" y="80.5" width="21.5" height="26.4" fill="#46566d" stroke="#ececec" stroke-width="1.4"/><rect x="1417.1" y="80" width="22.9" height="7.5" fill="#5ab4f0"/><rect x="1423" y="90.5" width="11.5" height="11.5" fill="none" stroke="#f0b429" stroke-width="1.5"/><path d="M1490 69.5 H1481.7 V88.5 H1489" fill="none" stroke="#ececec" stroke-width="1.3"/><path d="M1490 70.2 L1495.5 75.0 V76.5" fill="none" stroke="#ececec" stroke-width="1.2"/><path d="M1490 69.5 V74.5 H1495" fill="none" stroke="#ececec" stroke-width="1.1"/><path d="M1493 81 V79 A3.2 3.2 0 0 1 1499.4 79 V81" fill="none" stroke="#e04848" stroke-width="1.6"/><rect x="1490.5" y="80.5" width="11.5" height="8.5" rx="1" fill="#e04848"/><path d="M1496.2 82 V87.5 M1494.5 84 H1498" stroke="#fff" stroke-width="1.2"/><path d="M1490 99.5 H1481.7 V118.5 H1489" fill="none" stroke="#ececec" stroke-width="1.3"/><path d="M1490 100.2 L1495.5 105.0 V106.5" fill="none" stroke="#ececec" stroke-width="1.2"/><path d="M1490 99.5 V104.5 H1495" fill="none" stroke="#ececec" stroke-width="1.1"/><path d="M1488 109 V108 A3.4 3.4 0 0 1 1494.8 108" fill="none" stroke="#5ab4f0" stroke-width="1.6"/><rect x="1490.5" y="110" width="11.5" height="8.5" fill="#5ab4f0"/><circle cx="1496.2" cy="114.2" r="1.6" fill="#fff"/><path d="M1657 75.5 H1675 L1691 97 Q1694 99.5 1690 99.5 H1657 Z" fill="#f4f4f4"/><path d="M1674.5 75 L1680 69.5 Q1684 68 1686.5 71.5 L1694 84 Q1696 88.5 1692 91 L1689 93 Z" fill="#f4f4f4"/><circle cx="1688.5" cy="88" r="3" fill="none" stroke="#8a96a4" stroke-width="1.2"/><path d="M1668 92 V106 M1661 99 H1675" stroke="#5ab4f0" stroke-width="3.2"/><rect x="1752.5" y="70.3" width="23.3" height="23.9" rx="3" fill="#e8e8e8"/><rect x="1752.5" y="89" width="23.3" height="5" rx="2" fill="#bdbdbd"/><rect x="1765" y="80.8" width="22.5" height="24.2" rx="3" fill="#f4f4f4"/><rect x="1765" y="100" width="22.5" height="5" rx="2" fill="#c2c2c2"/><text x="1776.3" y="97.2" font-family="Liberation Sans" font-size="13.5" fill="#5ab4f0" text-anchor="middle">K</text><rect x="1816.5" y="70" width="18.5" height="18.5" fill="none" stroke="#d8d8d8" stroke-width="1.3"/><rect x="1815.8" y="69.2" width="20" height="4" fill="#5ab4f0"/><path d="M1818 76 L1826 86 M1818 86 L1826 76" stroke="#e0e0e0" stroke-width="1.1"/><path d="M1823 86.5 L1834 75" stroke="#f0b429" stroke-width="1.5"/><path d="M1852 72 V86 M1855 72 V86 M1857.5 72 V86 M1861 72 V86 M1864 72 V86 M1867 72 V86 M1869.5 72 V86 M1872.5 72 V86" stroke="#f0f0f0" stroke-width="1.6"/><rect x="1816.5" y="100" width="18.5" height="18" fill="none" stroke="#d8d8d8" stroke-width="1.3"/><path d="M1820 111 L1832 101" stroke="#f0b429" stroke-width="1.5"/><rect x="1815.8" y="111" width="20" height="7.5" fill="#1a62d8"/><text x="1825.8" y="117.5" font-family="Liberation Sans" font-weight="bold" font-size="6.5" fill="#fff" text-anchor="middle">PGP</text><rect x="1853" y="100.5" width="6.5" height="6.5" fill="none" stroke="#f0f0f0" stroke-width="1.4"/><rect x="1864.5" y="100.5" width="6.5" height="6.5" fill="none" stroke="#f0f0f0" stroke-width="1.4"/><rect x="1853" y="111" width="6.5" height="6.5" fill="none" stroke="#f0f0f0" stroke-width="1.4"/><rect x="1855.3" y="102.8" width="2" height="2" fill="#f0f0f0"/><rect x="1866.8" y="102.8" width="2" height="2" fill="#f0f0f0"/><rect x="1855.3" y="113.3" width="2" height="2" fill="#f0f0f0"/><path d="M1864.5 111 H1868 M1870 111 V114 M1864.5 113.5 V118 M1867 115.5 H1871.5 V118 M1867.5 117.5 H1869" stroke="#f0f0f0" stroke-width="1.3"/><path d="M1817 133 H1829 M1817 137 H1835 M1817 141 H1822 M1824 141 H1835 M1817 145 H1828 M1830 145 H1835 M1817 148 H1835" stroke="#e0e0e0" stroke-width="1.3"/><path d="M1832 129 V136 M1828.5 132.5 H1835.5" stroke="#f0b429" stroke-width="1.4"/><path d="M1855 133 V149 H1869 M1860 131 H1870.5 V141" fill="none" stroke="#e0e0e0" stroke-width="1.3"/><path d="M1858 137 H1868 M1858 141 H1868" stroke="#5ab4f0" stroke-width="1.4"/><path d="M1854.5 129 V135 M1851.5 132 H1857.5" stroke="#f0b429" stroke-width="1.4"/><circle cx="1866" cy="147" r="2.2" fill="none" stroke="#f0b429" stroke-width="1.2"/><circle cx="1870" cy="147" r="2.2" fill="none" stroke="#f0b429" stroke-width="1.2"/><polygon points="1880,165.8 1888.3,165.8 1884.15,170.8" fill="#f0f0f0"/><rect x="1925.8" y="68.7" width="33.4" height="37.6" fill="#f4f4f4"/><rect x="1929.5" y="72.3" width="26" height="13.2" fill="#5ab4f0"/><path d="M1929.5 91.2 H1955.5 M1929.5 100 H1955.5" stroke="#5ab4f0" stroke-width="1.6"/><path d="M1937 87.5 V95 M1947.5 96.5 V104" stroke="#5ab4f0" stroke-width="2.2"/><rect x="2000.3" y="68.7" width="32.2" height="37.6" fill="#f4f4f4"/><rect x="2010" y="68.7" width="1.6" height="37.6" fill="#46566d"/><path d="M2002.5 75 H2008 M2002.5 81.5 H2008 M2002.5 88 H2008 M2002.5 94.5 H2008 M2002.5 101 H2008" stroke="#5ab4f0" stroke-width="1.8"/><rect x="2014.2" y="74" width="4" height="4" fill="none" stroke="#5ab4f0" stroke-width="1.2"/><rect x="2023.5" y="74" width="4" height="4" fill="none" stroke="#5ab4f0" stroke-width="1.2"/><rect x="2014.2" y="84" width="4" height="4" fill="none" stroke="#5ab4f0" stroke-width="1.2"/><rect x="2023.5" y="84" width="4" height="4" fill="none" stroke="#5ab4f0" stroke-width="1.2"/><rect x="2014.2" y="94" width="13.5" height="7" fill="none" stroke="#5ab4f0" stroke-width="1.2"/><path d="M2058.3 68.7 H2091.7 V87 L2084 93 V106.3 H2058.3 Z" fill="#f4f4f4"/><path d="M2084 93 L2091.7 87 V99.5 L2084 106.3 Z" fill="#d8d8d8"/><path d="M2062 73.5 H2087 M2062 79.5 H2087 M2062 86 H2082 M2062 92.5 H2080 M2062 99 H2080" stroke="#5ab4f0" stroke-width="1.8"/><polygon points="2031.7,165.8 2040,165.8 2035.85,170.8" fill="#f0f0f0"/><path d="M2121.8 99.7 L2130.5 72.3 H2134.5 L2143.3 99.7 H2139.8 L2137.5 92.5 H2127.3 L2125 99.7 Z M2128.3 89.3 H2136.5 L2132.4 76.5 Z" fill="#f0b429"/><path d="M2138 102.5 L2141 95 L2155.5 82 Q2158.5 80.5 2158.5 84 L2145 98.5 Z" fill="#b8d4ec"/><rect x="2174" y="71.3" width="37.5" height="4.7" fill="#6cc070"/><rect x="2174" y="79" width="11" height="9" fill="#e0e0e0"/><rect x="2187" y="79" width="11" height="9" fill="#e0e0e0"/><polygon points="2200,79 2208.5,79 2200,87" fill="#e0e0e0"/><rect x="2174" y="91" width="11" height="9.5" fill="#e0e0e0"/><polygon points="2187,91 2194,91 2187,99" fill="#e0e0e0"/><path d="M2190 104.5 L2193 97 L2209 82.5 Q2212 81 2212 84.5 L2197 100.5 Z" fill="#b8d4ec"/><path d="M2243 70 V104.5 M2273.5 70 V83.5" stroke="#f0f0f0" stroke-width="2.2"/><path d="M2245 81.3 H2272 M2249.5 78 L2245.5 81.3 L2249.5 84.6 M2267.5 78 L2271.5 81.3 L2267.5 84.6" fill="none" stroke="#f0b429" stroke-width="1.7"/><path d="M2263 104.5 L2265.5 97.5 L2274.5 87.5 Q2277.8 86 2277.5 89.5 L2269 100.5 Z" fill="#b8d4ec"/><rect x="2325.8" y="69.1" width="36.4" height="36.7" fill="none" stroke="#f4f4f4" stroke-width="1.4"/><rect x="2325.3" y="68.6" width="37.4" height="7.3" fill="#f4f4f4"/><rect x="2330" y="78.8" width="12.5" height="3" fill="#5ab4f0"/><rect x="2330" y="84.8" width="10" height="3" fill="#5ab4f0"/><rect x="2330" y="91" width="7.5" height="3" fill="#5ab4f0"/><rect x="2330" y="97" width="5" height="3" fill="#5ab4f0"/><polygon points="2262,166 2270,166 2266.0,171" fill="#f0f0f0"/><path d="M21 193.6 H41.3 M21 200 H41.3 M21 206.2 H41.3" stroke="#e0e0e0" stroke-width="2.6"/><path d="M382.5 195.5 L392.3 205.3 M392.3 195.5 L382.5 205.3" stroke="#a4acb6" stroke-width="1.9"/><path d="M427.3 192.8 V207.3 M419.6 200 H435" stroke="#f0f0f0" stroke-width="2.6"/><path d="M458.5 190.5 L450 209.5" stroke="#6a7380" stroke-width="1.3"/><path d="M17.3 1106.2 H35.1 M17.3 1111.1 H35.1 M17.3 1116.4 H35.1" stroke="#e0e0e0" stroke-width="2.3"/><path d="M217.5 1105 L211 1118.5 M290 1105 L283.5 1118.5 M325 1105 L318.5 1118.5" stroke="#5a6370" stroke-width="1.2"/><path d="M303.3 1106.7 V1120 M296.7 1113.3 H310" stroke="#f0f0f0" stroke-width="2.3"/><path d="M10.5 1137 L22 1148.5 M22 1137 L10.5 1148.5" stroke="#6d7580" stroke-width="1.9"/><rect x="2386.5" y="1131.7" width="12" height="153" fill="#393c42"/><rect x="2387.5" y="1227.5" width="9.4" height="35.5" fill="#4a5059"/><path d="M2389 1146.5 L2392.5 1143 L2396 1146.5 M2389 1271.5 L2392.5 1275 L2396 1271.5" fill="none" stroke="#6a7078" stroke-width="1.3"/><defs><filter id="gl" x="-5%" y="-20%" width="110%" height="140%"><feGaussianBlur stdDeviation="0.9"/></filter></defs><defs><filter id="gl2" x="-5%" y="-20%" width="110%" height="140%"><feGaussianBlur stdDeviation="0.6"/></filter></defs><path d="M547.50 532.00 Q547.50 529.00 550.50 529.00 L643.90 529.00 Q646.90 529.00 646.90 532.00 L646.90 543.60 A12 12 0 0 0 658.90 555.60 L732.00 555.60 Q733.50 555.60 733.50 557.10 L733.50 559.90 A4.5 4.5 0 0 0 742.50 559.90 L742.50 557.10 Q742.50 555.60 744.00 555.60 L772.90 555.60 L772.90 564.60 L776.10 564.60 L776.10 555.60 L903.40 555.60 Q904.90 555.60 904.90 557.10 L904.90 559.90 A4.5 4.5 0 0 0 913.90 559.90 L913.90 557.10 Q913.90 555.60 915.40 555.60 L941.90 555.60 Q943.40 555.60 943.40 557.10 L943.40 563.40 A2.2 2.2 0 0 0 947.80 563.40 L947.80 557.10 Q947.80 555.60 949.30 555.60 L1074.60 555.60 Q1076.10 555.60 1076.10 557.10 L1076.10 559.90 A4.5 4.5 0 0 0 1085.10 559.90 L1085.10 557.10 Q1085.10 555.60 1086.60 555.60 L1115.40 555.60 L1115.40 564.60 L1118.60 564.60 L1118.60 555.60 L1246.20 555.60 Q1247.70 555.60 1247.70 557.10 L1247.70 559.90 A4.5 4.5 0 0 0 1256.70 559.90 L1256.70 557.10 Q1256.70 555.60 1258.20 555.60 L1286.60 555.60 L1286.60 564.60 L1289.80 564.60 L1289.80 555.60 L1425.00 555.60 L1425.00 564.60 L1428.20 564.60 L1428.20 555.60 L1457.60 555.60 Q1459.10 555.60 1459.10 557.10 L1459.10 559.90 A4.5 4.5 0 0 0 1468.10 559.90 L1468.10 557.10 Q1468.10 555.60 1469.60 555.60 L1596.90 555.60 L1596.90 564.60 L1600.10 564.60 L1600.10 555.60 L1628.20 555.60 Q1629.70 555.60 1629.70 557.10 L1629.70 559.90 A4.5 4.5 0 0 0 1638.70 559.90 L1638.70 557.10 Q1638.70 555.60 1640.20 555.60 L1703.40 555.60 L1703.40 564.60 L1706.60 564.60 L1706.60 555.60 L1735.50 555.60 Q1737.00 555.60 1737.00 557.10 L1737.00 559.90 A4.5 4.5 0 0 0 1746.00 559.90 L1746.00 557.10 Q1746.00 555.60 1747.50 555.60 L1775.60 555.60 A6.5 6.5 0 0 1 1782.10 562.10 L1782.10 619.00 A8 8 0 0 1 1774.10 627.00 L732.80 627.00 A17 17 0 0 0 715.80 644.00 L715.80 702.40 A17 17 0 0 0 732.80 719.40 L1812.00 719.40 A7.5 7.5 0 0 1 1819.50 726.90 L1819.50 782.70 A8 8 0 0 1 1811.50 790.70 L1802.60 790.70 L1802.60 781.70 L1799.40 781.70 L1799.40 790.70 L1770.20 790.70 Q1768.70 790.70 1768.70 789.20 L1768.70 785.70 A4.5 4.5 0 0 0 1759.70 785.70 L1759.70 789.20 Q1759.70 790.70 1758.20 790.70 L1661.10 790.70 Q1659.60 790.70 1659.60 789.20 L1659.60 785.70 A4.5 4.5 0 0 0 1650.60 785.70 L1650.60 789.20 Q1650.60 790.70 1649.10 790.70 L1620.60 790.70 L1620.60 781.70 L1617.40 781.70 L1617.40 790.70 L1554.20 790.70 Q1552.70 790.70 1552.70 789.20 L1552.70 785.70 A4.5 4.5 0 0 0 1543.70 785.70 L1543.70 789.20 Q1543.70 790.70 1542.20 790.70 L1513.60 790.70 L1513.60 781.70 L1510.40 781.70 L1510.40 790.70 L1383.00 790.70 Q1381.50 790.70 1381.50 789.20 L1381.50 785.70 A4.5 4.5 0 0 0 1372.50 785.70 L1372.50 789.20 Q1372.50 790.70 1371.00 790.70 L1342.60 790.70 L1342.60 781.70 L1339.40 781.70 L1339.40 790.70 L1204.30 790.70 L1204.30 781.70 L1201.10 781.70 L1201.10 790.70 L1171.80 790.70 Q1170.30 790.70 1170.30 789.20 L1170.30 785.70 A4.5 4.5 0 0 0 1161.30 785.70 L1161.30 789.20 Q1161.30 790.70 1159.80 790.70 L1033.10 790.70 L1033.10 781.70 L1029.90 781.70 L1029.90 790.70 L1001.20 790.70 Q999.70 790.70 999.70 789.20 L999.70 785.70 A4.5 4.5 0 0 0 990.70 785.70 L990.70 789.20 Q990.70 790.70 989.20 790.70 L861.60 790.70 L861.60 781.70 L858.40 781.70 L858.40 790.70 L829.70 790.70 Q828.20 790.70 828.20 789.20 L828.20 785.70 A4.5 4.5 0 0 0 819.20 785.70 L819.20 789.20 Q819.20 790.70 817.70 790.70 L720.80 790.70 Q719.30 790.70 719.30 789.20 L719.30 785.70 A4.5 4.5 0 0 0 710.30 785.70 L710.30 789.20 Q710.30 790.70 708.80 790.70 L680.90 790.70 L680.90 781.70 L677.70 781.70 L677.70 790.70 L663.70 790.70 Q660.70 790.70 660.70 787.70 L660.70 638.00 A19 19 0 0 0 641.70 619.00 L550.50 619.00 Q547.50 619.00 547.50 616.00 Z" fill="none" stroke="#2b4f96" stroke-width="7.6" stroke-linejoin="round" opacity="0.95" filter="url(#gl)"/><path d="M547.50 532.00 Q547.50 529.00 550.50 529.00 L643.90 529.00 Q646.90 529.00 646.90 532.00 L646.90 543.60 A12 12 0 0 0 658.90 555.60 L732.00 555.60 Q733.50 555.60 733.50 557.10 L733.50 559.90 A4.5 4.5 0 0 0 742.50 559.90 L742.50 557.10 Q742.50 555.60 744.00 555.60 L772.90 555.60 L772.90 564.60 L776.10 564.60 L776.10 555.60 L903.40 555.60 Q904.90 555.60 904.90 557.10 L904.90 559.90 A4.5 4.5 0 0 0 913.90 559.90 L913.90 557.10 Q913.90 555.60 915.40 555.60 L941.90 555.60 Q943.40 555.60 943.40 557.10 L943.40 563.40 A2.2 2.2 0 0 0 947.80 563.40 L947.80 557.10 Q947.80 555.60 949.30 555.60 L1074.60 555.60 Q1076.10 555.60 1076.10 557.10 L1076.10 559.90 A4.5 4.5 0 0 0 1085.10 559.90 L1085.10 557.10 Q1085.10 555.60 1086.60 555.60 L1115.40 555.60 L1115.40 564.60 L1118.60 564.60 L1118.60 555.60 L1246.20 555.60 Q1247.70 555.60 1247.70 557.10 L1247.70 559.90 A4.5 4.5 0 0 0 1256.70 559.90 L1256.70 557.10 Q1256.70 555.60 1258.20 555.60 L1286.60 555.60 L1286.60 564.60 L1289.80 564.60 L1289.80 555.60 L1425.00 555.60 L1425.00 564.60 L1428.20 564.60 L1428.20 555.60 L1457.60 555.60 Q1459.10 555.60 1459.10 557.10 L1459.10 559.90 A4.5 4.5 0 0 0 1468.10 559.90 L1468.10 557.10 Q1468.10 555.60 1469.60 555.60 L1596.90 555.60 L1596.90 564.60 L1600.10 564.60 L1600.10 555.60 L1628.20 555.60 Q1629.70 555.60 1629.70 557.10 L1629.70 559.90 A4.5 4.5 0 0 0 1638.70 559.90 L1638.70 557.10 Q1638.70 555.60 1640.20 555.60 L1703.40 555.60 L1703.40 564.60 L1706.60 564.60 L1706.60 555.60 L1735.50 555.60 Q1737.00 555.60 1737.00 557.10 L1737.00 559.90 A4.5 4.5 0 0 0 1746.00 559.90 L1746.00 557.10 Q1746.00 555.60 1747.50 555.60 L1775.60 555.60 A6.5 6.5 0 0 1 1782.10 562.10 L1782.10 619.00 A8 8 0 0 1 1774.10 627.00 L732.80 627.00 A17 17 0 0 0 715.80 644.00 L715.80 702.40 A17 17 0 0 0 732.80 719.40 L1812.00 719.40 A7.5 7.5 0 0 1 1819.50 726.90 L1819.50 782.70 A8 8 0 0 1 1811.50 790.70 L1802.60 790.70 L1802.60 781.70 L1799.40 781.70 L1799.40 790.70 L1770.20 790.70 Q1768.70 790.70 1768.70 789.20 L1768.70 785.70 A4.5 4.5 0 0 0 1759.70 785.70 L1759.70 789.20 Q1759.70 790.70 1758.20 790.70 L1661.10 790.70 Q1659.60 790.70 1659.60 789.20 L1659.60 785.70 A4.5 4.5 0 0 0 1650.60 785.70 L1650.60 789.20 Q1650.60 790.70 1649.10 790.70 L1620.60 790.70 L1620.60 781.70 L1617.40 781.70 L1617.40 790.70 L1554.20 790.70 Q1552.70 790.70 1552.70 789.20 L1552.70 785.70 A4.5 4.5 0 0 0 1543.70 785.70 L1543.70 789.20 Q1543.70 790.70 1542.20 790.70 L1513.60 790.70 L1513.60 781.70 L1510.40 781.70 L1510.40 790.70 L1383.00 790.70 Q1381.50 790.70 1381.50 789.20 L1381.50 785.70 A4.5 4.5 0 0 0 1372.50 785.70 L1372.50 789.20 Q1372.50 790.70 1371.00 790.70 L1342.60 790.70 L1342.60 781.70 L1339.40 781.70 L1339.40 790.70 L1204.30 790.70 L1204.30 781.70 L1201.10 781.70 L1201.10 790.70 L1171.80 790.70 Q1170.30 790.70 1170.30 789.20 L1170.30 785.70 A4.5 4.5 0 0 0 1161.30 785.70 L1161.30 789.20 Q1161.30 790.70 1159.80 790.70 L1033.10 790.70 L1033.10 781.70 L1029.90 781.70 L1029.90 790.70 L1001.20 790.70 Q999.70 790.70 999.70 789.20 L999.70 785.70 A4.5 4.5 0 0 0 990.70 785.70 L990.70 789.20 Q990.70 790.70 989.20 790.70 L861.60 790.70 L861.60 781.70 L858.40 781.70 L858.40 790.70 L829.70 790.70 Q828.20 790.70 828.20 789.20 L828.20 785.70 A4.5 4.5 0 0 0 819.20 785.70 L819.20 789.20 Q819.20 790.70 817.70 790.70 L720.80 790.70 Q719.30 790.70 719.30 789.20 L719.30 785.70 A4.5 4.5 0 0 0 710.30 785.70 L710.30 789.20 Q710.30 790.70 708.80 790.70 L680.90 790.70 L680.90 781.70 L677.70 781.70 L677.70 790.70 L663.70 790.70 Q660.70 790.70 660.70 787.70 L660.70 638.00 A19 19 0 0 0 641.70 619.00 L550.50 619.00 Q547.50 619.00 547.50 616.00 Z" fill="none" stroke="#5a40c8" stroke-width="3.6" stroke-linejoin="round" opacity="0.9" filter="url(#gl2)"/><path d="M547.50 532.00 Q547.50 529.00 550.50 529.00 L643.90 529.00 Q646.90 529.00 646.90 532.00 L646.90 543.60 A12 12 0 0 0 658.90 555.60 L732.00 555.60 Q733.50 555.60 733.50 557.10 L733.50 559.90 A4.5 4.5 0 0 0 742.50 559.90 L742.50 557.10 Q742.50 555.60 744.00 555.60 L772.90 555.60 L772.90 564.60 L776.10 564.60 L776.10 555.60 L903.40 555.60 Q904.90 555.60 904.90 557.10 L904.90 559.90 A4.5 4.5 0 0 0 913.90 559.90 L913.90 557.10 Q913.90 555.60 915.40 555.60 L941.90 555.60 Q943.40 555.60 943.40 557.10 L943.40 563.40 A2.2 2.2 0 0 0 947.80 563.40 L947.80 557.10 Q947.80 555.60 949.30 555.60 L1074.60 555.60 Q1076.10 555.60 1076.10 557.10 L1076.10 559.90 A4.5 4.5 0 0 0 1085.10 559.90 L1085.10 557.10 Q1085.10 555.60 1086.60 555.60 L1115.40 555.60 L1115.40 564.60 L1118.60 564.60 L1118.60 555.60 L1246.20 555.60 Q1247.70 555.60 1247.70 557.10 L1247.70 559.90 A4.5 4.5 0 0 0 1256.70 559.90 L1256.70 557.10 Q1256.70 555.60 1258.20 555.60 L1286.60 555.60 L1286.60 564.60 L1289.80 564.60 L1289.80 555.60 L1425.00 555.60 L1425.00 564.60 L1428.20 564.60 L1428.20 555.60 L1457.60 555.60 Q1459.10 555.60 1459.10 557.10 L1459.10 559.90 A4.5 4.5 0 0 0 1468.10 559.90 L1468.10 557.10 Q1468.10 555.60 1469.60 555.60 L1596.90 555.60 L1596.90 564.60 L1600.10 564.60 L1600.10 555.60 L1628.20 555.60 Q1629.70 555.60 1629.70 557.10 L1629.70 559.90 A4.5 4.5 0 0 0 1638.70 559.90 L1638.70 557.10 Q1638.70 555.60 1640.20 555.60 L1703.40 555.60 L1703.40 564.60 L1706.60 564.60 L1706.60 555.60 L1735.50 555.60 Q1737.00 555.60 1737.00 557.10 L1737.00 559.90 A4.5 4.5 0 0 0 1746.00 559.90 L1746.00 557.10 Q1746.00 555.60 1747.50 555.60 L1775.60 555.60 A6.5 6.5 0 0 1 1782.10 562.10 L1782.10 619.00 A8 8 0 0 1 1774.10 627.00 L732.80 627.00 A17 17 0 0 0 715.80 644.00 L715.80 702.40 A17 17 0 0 0 732.80 719.40 L1812.00 719.40 A7.5 7.5 0 0 1 1819.50 726.90 L1819.50 782.70 A8 8 0 0 1 1811.50 790.70 L1802.60 790.70 L1802.60 781.70 L1799.40 781.70 L1799.40 790.70 L1770.20 790.70 Q1768.70 790.70 1768.70 789.20 L1768.70 785.70 A4.5 4.5 0 0 0 1759.70 785.70 L1759.70 789.20 Q1759.70 790.70 1758.20 790.70 L1661.10 790.70 Q1659.60 790.70 1659.60 789.20 L1659.60 785.70 A4.5 4.5 0 0 0 1650.60 785.70 L1650.60 789.20 Q1650.60 790.70 1649.10 790.70 L1620.60 790.70 L1620.60 781.70 L1617.40 781.70 L1617.40 790.70 L1554.20 790.70 Q1552.70 790.70 1552.70 789.20 L1552.70 785.70 A4.5 4.5 0 0 0 1543.70 785.70 L1543.70 789.20 Q1543.70 790.70 1542.20 790.70 L1513.60 790.70 L1513.60 781.70 L1510.40 781.70 L1510.40 790.70 L1383.00 790.70 Q1381.50 790.70 1381.50 789.20 L1381.50 785.70 A4.5 4.5 0 0 0 1372.50 785.70 L1372.50 789.20 Q1372.50 790.70 1371.00 790.70 L1342.60 790.70 L1342.60 781.70 L1339.40 781.70 L1339.40 790.70 L1204.30 790.70 L1204.30 781.70 L1201.10 781.70 L1201.10 790.70 L1171.80 790.70 Q1170.30 790.70 1170.30 789.20 L1170.30 785.70 A4.5 4.5 0 0 0 1161.30 785.70 L1161.30 789.20 Q1161.30 790.70 1159.80 790.70 L1033.10 790.70 L1033.10 781.70 L1029.90 781.70 L1029.90 790.70 L1001.20 790.70 Q999.70 790.70 999.70 789.20 L999.70 785.70 A4.5 4.5 0 0 0 990.70 785.70 L990.70 789.20 Q990.70 790.70 989.20 790.70 L861.60 790.70 L861.60 781.70 L858.40 781.70 L858.40 790.70 L829.70 790.70 Q828.20 790.70 828.20 789.20 L828.20 785.70 A4.5 4.5 0 0 0 819.20 785.70 L819.20 789.20 Q819.20 790.70 817.70 790.70 L720.80 790.70 Q719.30 790.70 719.30 789.20 L719.30 785.70 A4.5 4.5 0 0 0 710.30 785.70 L710.30 789.20 Q710.30 790.70 708.80 790.70 L680.90 790.70 L680.90 781.70 L677.70 781.70 L677.70 790.70 L663.70 790.70 Q660.70 790.70 660.70 787.70 L660.70 638.00 A19 19 0 0 0 641.70 619.00 L550.50 619.00 Q547.50 619.00 547.50 616.00 Z" fill="none" stroke="#dc12f2" stroke-width="1.7" stroke-linejoin="round"/><path d="M776.20 564.60 L776.20 573.00 Q776.20 576.20 773.00 576.20 L720.00 576.20 A5.1 5.1 0 1 1 724.79 569.37 L727.20 572.10 Q728.00 573.30 730.00 573.30 L770.60 573.30 Q772.80 573.30 772.80 571.10 L772.80 564.60" fill="none" stroke="#e40cf0" stroke-width="1.9" stroke-linejoin="round"/><path d="M1118.70 564.60 L1118.70 572.30 Q1118.70 575.50 1115.50 575.50 L1061.20 575.50 A5.1 5.1 0 1 1 1065.99 568.67 L1068.40 571.40 Q1069.20 572.60 1071.20 572.60 L1113.10 572.60 Q1115.30 572.60 1115.30 570.40 L1115.30 564.60" fill="none" stroke="#e40cf0" stroke-width="1.9" stroke-linejoin="round"/><path d="M1289.90 564.60 L1289.90 582.30 Q1289.90 585.50 1286.70 585.50 L1233.50 585.50 A5.1 5.1 0 1 1 1238.29 578.67 L1240.70 581.40 Q1241.50 582.60 1243.50 582.60 L1284.30 582.60 Q1286.50 582.60 1286.50 580.40 L1286.50 564.60" fill="none" stroke="#e40cf0" stroke-width="1.9" stroke-linejoin="round"/><path d="M1424.90 564.60 L1424.90 571.80 Q1424.90 575.00 1428.10 575.00 L1481.50 575.00 A5.1 5.1 0 1 0 1476.71 568.17 L1474.30 570.90 Q1473.50 572.10 1471.50 572.10 L1430.50 572.10 Q1428.30 572.10 1428.30 569.90 L1428.30 564.60" fill="none" stroke="#e40cf0" stroke-width="1.9" stroke-linejoin="round"/><path d="M1596.80 564.60 L1596.80 571.80 Q1596.80 575.00 1600.00 575.00 L1653.00 575.00 A5.1 5.1 0 1 0 1648.21 568.17 L1645.80 570.90 Q1645.00 572.10 1643.00 572.10 L1602.40 572.10 Q1600.20 572.10 1600.20 569.90 L1600.20 564.60" fill="none" stroke="#e40cf0" stroke-width="1.9" stroke-linejoin="round"/><path d="M1703.30 564.60 L1703.30 571.80 Q1703.30 575.00 1706.50 575.00 L1760.00 575.00 A5.1 5.1 0 1 0 1755.21 568.17 L1752.80 570.90 Q1752.00 572.10 1750.00 572.10 L1708.90 572.10 Q1706.70 572.10 1706.70 569.90 L1706.70 564.60" fill="none" stroke="#e40cf0" stroke-width="1.9" stroke-linejoin="round"/><path d="M677.60 781.70 L677.60 763.90 Q677.60 760.70 680.80 760.70 L733.50 760.70 A5.1 5.1 0 1 1 728.71 767.53 L726.30 764.80 Q725.50 763.60 723.50 763.60 L683.20 763.60 Q681.00 763.60 681.00 765.80 L681.00 781.70" fill="none" stroke="#e40cf0" stroke-width="1.9" stroke-linejoin="round"/><path d="M861.70 781.70 L861.70 773.50 Q861.70 770.30 858.50 770.30 L805.10 770.30 A5.1 5.1 0 1 0 809.89 777.13 L812.30 774.40 Q813.10 773.20 815.10 773.20 L856.10 773.20 Q858.30 773.20 858.30 775.40 L858.30 781.70" fill="none" stroke="#e40cf0" stroke-width="1.9" stroke-linejoin="round"/><path d="M1033.20 781.70 L1033.20 773.50 Q1033.20 770.30 1030.00 770.30 L976.10 770.30 A5.1 5.1 0 1 0 980.89 777.13 L983.30 774.40 Q984.10 773.20 986.10 773.20 L1027.60 773.20 Q1029.80 773.20 1029.80 775.40 L1029.80 781.70" fill="none" stroke="#e40cf0" stroke-width="1.9" stroke-linejoin="round"/><path d="M1204.40 781.70 L1204.40 773.50 Q1204.40 770.30 1201.20 770.30 L1147.60 770.30 A5.1 5.1 0 1 0 1152.39 777.13 L1154.80 774.40 Q1155.60 773.20 1157.60 773.20 L1198.80 773.20 Q1201.00 773.20 1201.00 775.40 L1201.00 781.70" fill="none" stroke="#e40cf0" stroke-width="1.9" stroke-linejoin="round"/><path d="M1339.30 781.70 L1339.30 773.70 Q1339.30 770.50 1342.50 770.50 L1396.20 770.50 A5.1 5.1 0 1 1 1391.41 777.33 L1389.00 774.60 Q1388.20 773.40 1386.20 773.40 L1344.90 773.40 Q1342.70 773.40 1342.70 775.60 L1342.70 781.70" fill="none" stroke="#e40cf0" stroke-width="1.9" stroke-linejoin="round"/><path d="M1510.30 781.70 L1510.30 773.30 Q1510.30 770.10 1513.50 770.10 L1567.40 770.10 A5.1 5.1 0 1 1 1562.61 776.93 L1560.20 774.20 Q1559.40 773.00 1557.40 773.00 L1515.90 773.00 Q1513.70 773.00 1513.70 775.20 L1513.70 781.70" fill="none" stroke="#e40cf0" stroke-width="1.9" stroke-linejoin="round"/><path d="M1617.30 781.70 L1617.30 773.30 Q1617.30 770.10 1620.50 770.10 L1674.40 770.10 A5.1 5.1 0 1 1 1669.61 776.93 L1667.20 774.20 Q1666.40 773.00 1664.40 773.00 L1622.90 773.00 Q1620.70 773.00 1620.70 775.20 L1620.70 781.70" fill="none" stroke="#e40cf0" stroke-width="1.9" stroke-linejoin="round"/><path d="M1802.70 781.70 L1802.70 763.40 Q1802.70 760.20 1799.50 760.20 L1745.60 760.20 A5.1 5.1 0 1 0 1750.39 767.03 L1752.80 764.30 Q1753.60 763.10 1755.60 763.10 L1797.10 763.10 Q1799.30 763.10 1799.30 765.30 L1799.30 781.70" fill="none" stroke="#e40cf0" stroke-width="1.9" stroke-linejoin="round"/><ellipse cx="687.7" cy="673" rx="4.5" ry="4.5" fill="none" stroke="#e40cf0" stroke-width="1.9"/><ellipse cx="1224" cy="607.4" rx="3" ry="3" fill="none" stroke="#e40cf0" stroke-width="1.9"/><ellipse cx="1536" cy="572.2" rx="6" ry="5" fill="none" stroke="#e40cf0" stroke-width="1.9"/><ellipse cx="1761" cy="607.4" rx="3" ry="3" fill="none" stroke="#e40cf0" stroke-width="1.9"/><ellipse cx="1224" cy="739.3" rx="3" ry="3" fill="none" stroke="#e40cf0" stroke-width="1.9"/><ellipse cx="1259.7" cy="774.25" rx="5.5" ry="5" fill="none" stroke="#e40cf0" stroke-width="1.9"/><ellipse cx="1761.4" cy="739" rx="3" ry="3" fill="none" stroke="#e40cf0" stroke-width="1.9"/><ellipse cx="1797.5" cy="730" rx="6" ry="5" fill="none" stroke="#e40cf0" stroke-width="1.9"/><rect x="2325" y="242.2" width="13" height="3.6" fill="#f0f0f0"/><path d="M2353 236.5 H2362 V245" fill="none" stroke="#e0e0e0" stroke-width="1.3"/><rect x="2351" y="238.5" width="9" height="8.5" fill="none" stroke="#f4f4f4" stroke-width="2"/><path d="M2376 236.8 L2385.6 245.8 M2385.6 236.8 L2376 245.8" stroke="#f4f4f4" stroke-width="2.4"/><path d="M2336.02 358.94 A60.25 60.25 0 0 1 2290.24 404.72" fill="none" stroke="#4a515b" stroke-width="17.099999999999994"/><path d="M2264.16 404.72 A60.25 60.25 0 0 1 2218.38 358.94" fill="none" stroke="#4a515b" stroke-width="17.099999999999994"/><path d="M2218.38 332.86 A60.25 60.25 0 0 1 2264.16 287.08" fill="none" stroke="#4a515b" stroke-width="17.099999999999994"/><path d="M2290.24 287.08 A60.25 60.25 0 0 1 2336.02 332.86" fill="none" stroke="#4a515b" stroke-width="17.099999999999994"/><text x="2277.6" y="295" font-family="Liberation Sans" font-weight="bold" font-size="22" fill="#9ca2aa" text-anchor="middle">N</text><text x="2277.6" y="414" font-family="Liberation Sans" font-weight="bold" font-size="22" fill="#9ca2aa" text-anchor="middle">S</text><text x="2217.3" y="355.3" font-family="Liberation Sans" font-weight="bold" font-size="22" fill="#9ca2aa" text-anchor="middle">W</text><text x="2337.5" y="355.3" font-family="Liberation Sans" font-weight="bold" font-size="22" fill="#9ca2aa" text-anchor="middle">E</text><polygon points="2268.7,300.7 2286.6,300.7 2277.6,309.6" fill="#f4f4f4"/><polygon points="2268.7,391 2286.6,391 2277.6,382" fill="#f4f4f4"/><polygon points="2232.8,337.3 2241.8,346.3 2232.8,355.3" fill="#f4f4f4"/><polygon points="2322.5,337.3 2313.5,346.3 2322.5,355.3" fill="#f4f4f4"/><rect x="2247.5" y="316.2" width="60.3" height="60.3" rx="9" fill="#dcdddd"/><rect x="2259" y="327.6" width="37.4" height="37.4" fill="#cdcecf"/><text x="2278" y="350.5" font-family="Liberation Sans" font-size="11.5" fill="#3a3a3a" text-anchor="middle">TOP</text><polygon points="2212,269 2219,275.5 2217,275.5 2217,282.7 2207,282.7 2207,275.5 2205,275.5" fill="#8a929c"/><path d="M2333 274.5 Q2343 272.5 2349.5 278.5" fill="none" stroke="#7c848e" stroke-width="3"/><polygon points="2327.3,273 2335,268 2335.5,279" fill="#7c848e"/><path d="M2350.5 281 Q2355.5 287 2354.5 294" fill="none" stroke="#7c848e" stroke-width="3"/><polygon points="2349.5,293 2359,292.5 2354,300.7" fill="#7c848e"/><path d="M26 1066.7 V988" stroke="#e8e8e8" stroke-width="2"/><path d="M19.5 1003.5 L26 986.5 L32.5 1003.5" fill="none" stroke="#e8e8e8" stroke-width="2"/><rect x="18.8" y="1066.8" width="14.8" height="14.8" rx="1" fill="none" stroke="#e8e8e8" stroke-width="2"/><path d="M33.5 1073.3 H112.5" stroke="#e8e8e8" stroke-width="2"/><path d="M97 1067 L113.5 1073.3 L97 1079.6" fill="none" stroke="#e8e8e8" stroke-width="2"/><path d="M20.2 955.5 L26.2 964.2 L32.5 955.5 M26.2 964.2 V972.5" fill="none" stroke="#e8e8e8" stroke-width="1.8"/><path d="M129.2 1065.5 L142.2 1082.2 M142.2 1065.5 L129.2 1082.2" fill="none" stroke="#e8e8e8" stroke-width="1.8"/><rect x="419.45" y="1322.1" width="23.5" height="24.2" fill="#4a6585" stroke="#4aa3f0" stroke-width="1.5"/><rect x="449.55" y="1322.1" width="23.5" height="24.2" fill="#4a6585" stroke="#4aa3f0" stroke-width="1.5"/><rect x="479.45" y="1322.1" width="23.5" height="24.2" fill="#4a6585" stroke="#4aa3f0" stroke-width="1.5"/><rect x="539.65" y="1322.1" width="23.5" height="24.2" fill="#4a6585" stroke="#4aa3f0" stroke-width="1.5"/><rect x="569.55" y="1322.1" width="23.5" height="24.2" fill="#4a6585" stroke="#4aa3f0" stroke-width="1.5"/><rect x="599.65" y="1322.1" width="23.5" height="24.2" fill="#4a6585" stroke="#4aa3f0" stroke-width="1.5"/><rect x="719.45" y="1322.1" width="23.5" height="24.2" fill="#4a6585" stroke="#4aa3f0" stroke-width="1.5"/><path d="M333 1325.5 H349.5 M333 1330.5 H349.5 M333 1335.5 H349.5 M333.5 1325 V1341 M339 1325 V1341 M344.5 1325 V1341 M349.5 1325 V1341" stroke="#ececec" stroke-width="1.7"/><rect x="333" y="1340.5" width="17" height="2.3" fill="#5ab4f0"/><rect x="362.8" y="1325" width="16.5" height="17" fill="none" stroke="#ececec" stroke-width="1.5"/><path d="M362.8 1330.5 H379.3 M362.8 1336 H379.3 M368.3 1325 V1342 M373.8 1325 V1342" stroke="#5ab4f0" stroke-width="1.6"/><path d="M392.5 1324.5 V1341.5 H410" fill="none" stroke="#ececec" stroke-width="1.6"/><rect x="394" y="1335" width="5" height="5" fill="none" stroke="#5ab4f0" stroke-width="1.2"/><circle cx="430" cy="1334.5" r="8" fill="none" stroke="#d8d8d8" stroke-width="1.6"/><path d="M430 1334.5 L438 1325 M431 1334.5 H439" stroke="#5ab4f0" stroke-width="1.5"/><rect x="453" y="1325.5" width="16" height="16" fill="none" stroke="#ececec" stroke-width="1.6"/><rect x="452" y="1324.5" width="5" height="5" fill="none" stroke="#e03030" stroke-width="1.3"/><path d="M482.5 1341 H500 M482.5 1341 L499 1326" stroke="#ececec" stroke-width="1.5"/><rect x="489.5" y="1333" width="3.5" height="3.5" fill="none" stroke="#5ab4f0" stroke-width="1.1"/><path d="M513 1323.5 V1342 H530 M513 1342 L522 1334" fill="none" stroke="#ececec" stroke-width="1.3"/><polygon points="524,1323 529.5,1323 526,1328.5 529,1328.5 521.5,1335 524.5,1329.5 522,1329.5" fill="#f0b429"/><path d="M547 1324 V1333 M542.5 1328.5 H551.5" stroke="#f0f0f0" stroke-width="1.6"/><rect x="550" y="1333.5" width="10.5" height="5" fill="none" stroke="#5ab4f0" stroke-width="1.4"/><rect x="573" y="1326" width="17" height="2.5" fill="#f4f4f4"/><rect x="573" y="1331.5" width="17" height="3.5" fill="#f4f4f4"/><rect x="573" y="1338" width="17" height="4.5" fill="#f4f4f4"/><rect x="603" y="1326" width="17" height="17" fill="#9fd0f6" stroke="#e0e0e0" stroke-width="1.5"/><rect x="633.8" y="1325" width="14.5" height="17" fill="#f4f4f4"/><path d="M636 1331 H638 M636 1335 H638 M636 1339 H638 M640 1331 H646.5 M640 1335 H646.5 M640 1339 H646.5" stroke="#30353e" stroke-width="1.3"/><rect x="633.8" y="1325" width="14.5" height="3" fill="#d0d0d0"/><path d="M665 1324 V1333 M660.5 1328.5 H669.5" stroke="#f0f0f0" stroke-width="1.5"/><rect x="668" y="1334" width="7" height="7" fill="#f0f0f0"/><rect x="672" y="1337.5" width="7" height="6" fill="none" stroke="#5ab4f0" stroke-width="1.5"/><path d="M692 1326 H710 M692 1330 H710 M692 1339 H710 M692 1343 H710" stroke="#e8e8e8" stroke-width="1.5"/><path d="M692 1334.5 H710" stroke="#5ab4f0" stroke-width="1.5" stroke-dasharray="3 1.5"/><rect x="727" y="1323.5" width="12" height="11" fill="none" stroke="#d0d0d0" stroke-width="1.2"/><path d="M727 1327 H739 M727 1331 H739 M731 1323.5 V1334.5 M735 1323.5 V1334.5" stroke="#d0d0d0" stroke-width="1"/><rect x="722" y="1331" width="14" height="10" fill="none" stroke="#5ab4f0" stroke-width="1.3" stroke-dasharray="2 1.5"/><path d="M739 1337 V1341 H733" fill="none" stroke="#f0b429" stroke-width="1.3"/><rect x="750.3" y="1335" width="9" height="7.5" fill="#b0b0b0"/><path d="M761 1325 V1342" stroke="#f0b429" stroke-width="1.5"/><rect x="761.5" y="1324" width="9" height="7.5" fill="#5ab4f0"/><path d="M12 1347 H325" stroke="#59606a" stroke-width="1" stroke-dasharray="2 1"/><rect x="1998.5" y="1323" width="18.5" height="18.5" fill="none" stroke="#5ab4f0" stroke-width="1.3"/><text x="2008" y="1336.3" font-family="Liberation Mono" font-size="12" fill="#5ab4f0" text-anchor="middle" letter-spacing="-1.5">0.0</text><polygon points="2109.4,1326.5 2121.9,1326.5 2115.6,1333.75" fill="#f4f4f4"/><polygon points="2142.6000000000004,1322.3 2145.8,1334.3 2153.0,1343.0 2142.6000000000004,1337.8 2132.3,1343.0 2139.3,1334.3" fill="#9fd0f6" stroke="#5ab4f0" stroke-width="1.2"/><polygon points="2184.4,1326.5 2196.9,1326.5 2190.6,1333.75" fill="#f4f4f4"/><polygon points="2217.6000000000004,1322.3 2220.8,1334.3 2228.0,1343.0 2217.6000000000004,1337.8 2207.3,1343.0 2214.3,1334.3" fill="#9fd0f6" stroke="#5ab4f0" stroke-width="1.2"/><circle cx="2224.5" cy="1338.5" r="3" fill="#f0b429"/><polygon points="2244.7000000000003,1322.3 2247.9,1334.3 2255.1,1343.0 2244.7000000000003,1337.8 2234.4,1343.0 2241.4,1334.3" fill="#9fd0f6" stroke="#5ab4f0" stroke-width="1.2"/><path d="M2238 1328 L2243 1323 M2239 1325 L2244 1325" stroke="#8a96a4" stroke-width="1.5"/><rect x="2263" y="1331" width="8" height="9" fill="none" stroke="#f0f0f0" stroke-width="1.4"/><circle cx="2277" cy="1328.5" r="4.8" fill="none" stroke="#f0f0f0" stroke-width="1.4"/><polygon points="2274.5,1335.5 2279,1340 2274.5,1344.5 2270,1340" fill="none" stroke="#f0f0f0" stroke-width="1.3"/><polygon points="2309.40,1331.11 2309.49,1332.97 2306.64,1334.16 2306.18,1335.42 2307.63,1338.16 2306.38,1339.54 2303.52,1338.37 2302.30,1338.94 2301.39,1341.90 2299.53,1341.99 2298.34,1339.14 2297.08,1338.68 2294.34,1340.13 2292.96,1338.88 2294.13,1336.02 2293.56,1334.80 2290.60,1333.89 2290.51,1332.03 2293.36,1330.84 2293.82,1329.58 2292.37,1326.84 2293.62,1325.46 2296.48,1326.63 2297.70,1326.06 2298.61,1323.10 2300.47,1323.01 2301.66,1325.86 2302.92,1326.32 2305.66,1324.87 2307.04,1326.12 2305.87,1328.98 2306.44,1330.20" fill="#5ab4f0"/><circle cx="2300" cy="1332.5" r="3.9899999999999998" fill="#323843"/><rect x="2320.5" y="1326" width="15" height="12" fill="none" stroke="#5ab4f0" stroke-width="1.6"/><path d="M2323 1322.5 V1326 M2327 1322.5 V1326 M2331 1322.5 V1326 M2335 1322.5 V1326 M2323 1338 V1342 M2327 1338 V1342 M2331 1338 V1342 M2335 1338 V1342" stroke="#5ab4f0" stroke-width="1.3"/><polygon points="2329,1327 2331,1327 2328.5,1331.5 2331,1331.5 2326.5,1337 2327.5,1332.5 2325.5,1332.5" fill="#f0b429"/><path d="M2346.5 1328.5 V1323.5 H2351.5 M2346.5 1323.5 L2352.5 1329.5 M2364 1328.5 V1323.5 H2359 M2364 1323.5 L2358 1329.5 M2346.5 1337 V1342 H2351.5 M2346.5 1342 L2352.5 1336 M2364 1337 V1342 H2359 M2364 1342 L2358 1336" fill="none" stroke="#f0f0f0" stroke-width="1.5"/><path d="M2374 1324.5 H2391.7 M2374 1332.5 H2391.7 M2374 1340.5 H2391.7" stroke="#5ab4f0" stroke-width="2.6"/></svg><div style="position:absolute;left:842.8px;top:111.2px;width:399.5px;height:129.6px;background:#323843;border-radius:3px;box-shadow:3px 3px 3px rgba(0,0,0,0.3)"></div><div class="t" style="left:852.17px;top:124.81px;font-size:15.22px;line-height:15.22px;color:#f4f4f4;font-weight:bold;font-family:'Liberation Sans';transform:scaleX(1.0329);transform-origin:0 0;">Chain Select</div><div class="t" style="left:852.14px;top:153.31px;font-size:15.22px;line-height:15.22px;color:#e6e6e6;font-weight:normal;font-family:'Liberation Sans';transform:scaleX(1.0801);transform-origin:0 0;">Selects all objects connected to the selected object:</div><div class="t" style="left:852.07px;top:174.51px;font-size:15.22px;line-height:15.22px;color:#e6e6e6;font-weight:normal;font-family:'Liberation Sans';transform:scaleX(0.9563);transform-origin:0 0;">CHAINSELECT</div><div class="t" style="left:851.80px;top:211.91px;font-size:15.22px;line-height:15.22px;color:#f4f4f4;font-weight:bold;font-family:'Liberation Sans';transform:scaleX(1.0906);transform-origin:0 0;">F1 for more help</div>
</body></html>
